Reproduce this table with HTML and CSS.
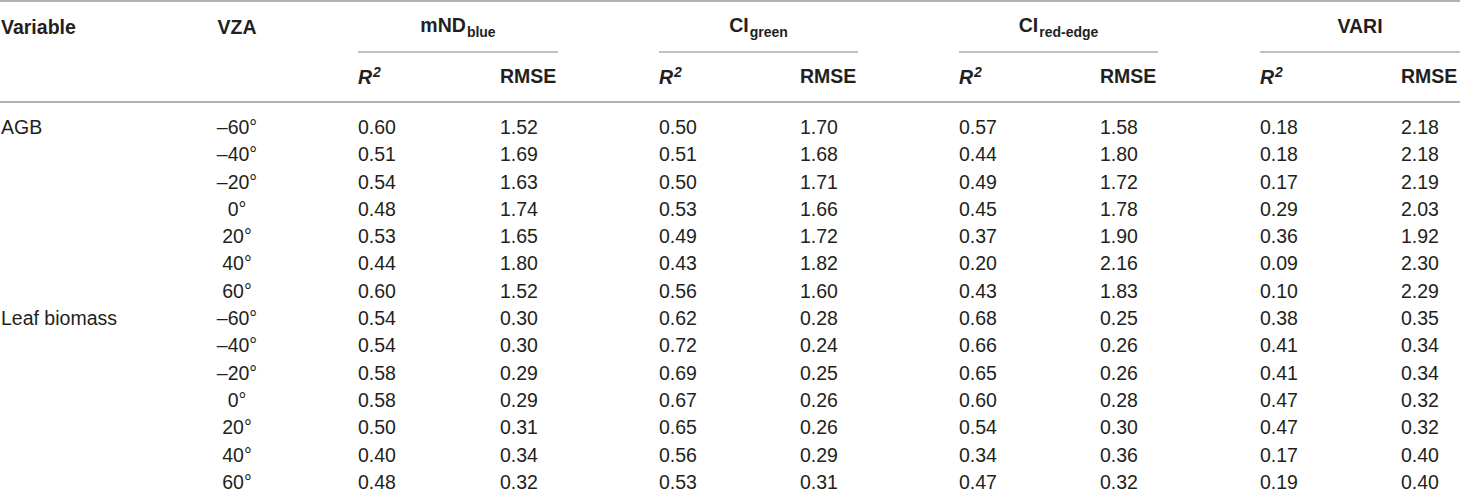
FILE: index.html
```html
<!DOCTYPE html>
<html lang="en">
<head>
<meta charset="utf-8">
<title>VZA table</title>
<link rel="stylesheet" href="styles.css">
</head>
<body>
<table class="tbl">
  <colgroup>
    <col class="c-var"><col class="c-vza"><col class="c-sp1">
    <col class="c-r2a"><col class="c-rm"><col class="c-gap">
    <col class="c-r2"><col class="c-rm"><col class="c-gap">
    <col class="c-r2"><col class="c-rm"><col class="c-gap2">
    <col class="c-r2"><col class="c-rm2">
  </colgroup>
  <thead>
    <tr class="h1">
      <th class="left">Variable</th>
      <th class="center">VZA</th>
      <th></th>
      <th colspan="2" class="grp">mND<span class="sub">blue</span></th>
      <th></th>
      <th colspan="2" class="grp">CI<span class="sub">green</span></th>
      <th></th>
      <th colspan="2" class="grp">CI<span class="sub">red-edge</span></th>
      <th></th>
      <th colspan="2" class="grp">VARI</th>
    </tr>
    <tr class="h2">
      <th></th><th></th><th></th>
      <th class="left"><i>R</i><span class="sup">2</span></th><th class="left">RMSE</th><th></th>
      <th class="left"><i>R</i><span class="sup">2</span></th><th class="left">RMSE</th><th></th>
      <th class="left"><i>R</i><span class="sup">2</span></th><th class="left">RMSE</th><th></th>
      <th class="left"><i>R</i><span class="sup">2</span></th><th class="left">RMSE</th>
    </tr>
  </thead>
  <tbody>
    <tr class="first"><td>AGB</td><td class="center">–60°</td><td></td><td>0.60</td><td>1.52</td><td></td><td>0.50</td><td>1.70</td><td></td><td>0.57</td><td>1.58</td><td></td><td>0.18</td><td>2.18</td></tr>
    <tr><td></td><td class="center">–40°</td><td></td><td>0.51</td><td>1.69</td><td></td><td>0.51</td><td>1.68</td><td></td><td>0.44</td><td>1.80</td><td></td><td>0.18</td><td>2.18</td></tr>
    <tr><td></td><td class="center">–20°</td><td></td><td>0.54</td><td>1.63</td><td></td><td>0.50</td><td>1.71</td><td></td><td>0.49</td><td>1.72</td><td></td><td>0.17</td><td>2.19</td></tr>
    <tr><td></td><td class="center">0°</td><td></td><td>0.48</td><td>1.74</td><td></td><td>0.53</td><td>1.66</td><td></td><td>0.45</td><td>1.78</td><td></td><td>0.29</td><td>2.03</td></tr>
    <tr><td></td><td class="center">20°</td><td></td><td>0.53</td><td>1.65</td><td></td><td>0.49</td><td>1.72</td><td></td><td>0.37</td><td>1.90</td><td></td><td>0.36</td><td>1.92</td></tr>
    <tr><td></td><td class="center">40°</td><td></td><td>0.44</td><td>1.80</td><td></td><td>0.43</td><td>1.82</td><td></td><td>0.20</td><td>2.16</td><td></td><td>0.09</td><td>2.30</td></tr>
    <tr><td></td><td class="center">60°</td><td></td><td>0.60</td><td>1.52</td><td></td><td>0.56</td><td>1.60</td><td></td><td>0.43</td><td>1.83</td><td></td><td>0.10</td><td>2.29</td></tr>
    <tr><td>Leaf biomass</td><td class="center">–60°</td><td></td><td>0.54</td><td>0.30</td><td></td><td>0.62</td><td>0.28</td><td></td><td>0.68</td><td>0.25</td><td></td><td>0.38</td><td>0.35</td></tr>
    <tr><td></td><td class="center">–40°</td><td></td><td>0.54</td><td>0.30</td><td></td><td>0.72</td><td>0.24</td><td></td><td>0.66</td><td>0.26</td><td></td><td>0.41</td><td>0.34</td></tr>
    <tr><td></td><td class="center">–20°</td><td></td><td>0.58</td><td>0.29</td><td></td><td>0.69</td><td>0.25</td><td></td><td>0.65</td><td>0.26</td><td></td><td>0.41</td><td>0.34</td></tr>
    <tr><td></td><td class="center">0°</td><td></td><td>0.58</td><td>0.29</td><td></td><td>0.67</td><td>0.26</td><td></td><td>0.60</td><td>0.28</td><td></td><td>0.47</td><td>0.32</td></tr>
    <tr><td></td><td class="center">20°</td><td></td><td>0.50</td><td>0.31</td><td></td><td>0.65</td><td>0.26</td><td></td><td>0.54</td><td>0.30</td><td></td><td>0.47</td><td>0.32</td></tr>
    <tr><td></td><td class="center">40°</td><td></td><td>0.40</td><td>0.34</td><td></td><td>0.56</td><td>0.29</td><td></td><td>0.34</td><td>0.36</td><td></td><td>0.17</td><td>0.40</td></tr>
    <tr><td></td><td class="center">60°</td><td></td><td>0.48</td><td>0.32</td><td></td><td>0.53</td><td>0.31</td><td></td><td>0.47</td><td>0.32</td><td></td><td>0.19</td><td>0.40</td></tr>
  </tbody>
</table>
</body>
</html>
```

FILE: styles.css
```css
html, body {
  margin: 0;
  padding: 0;
  background: #ffffff;
}

body {
  font-family: "Liberation Sans", Arial, sans-serif;
  color: #231f20;
  overflow: hidden;
}

.tbl {
  width: 1460px;
  table-layout: fixed;
  border-collapse: separate;
  border-spacing: 0;
  font-size: 19.5px;
  border-top: 2px solid #b3b3b3;
}

.c-var { width: 215px; }
.c-vza { width: 44px; }
.c-sp1 { width: 99px; }
.c-r2a { width: 142px; }
.c-r2 { width: 141px; }
.c-rm { width: 58px; }
.c-rm2 { width: 59px; }
.c-gap { width: 101px; }
.c-gap2 { width: 102px; }

th, td {
  padding: 0;
  text-align: left;
  white-space: nowrap;
  overflow: visible;
}

th {
  font-weight: bold;
}

.left { text-align: left; }
.center { text-align: center; }

td:first-child, th:first-child {
  padding-left: 1px;
}

.h1 th {
  height: 49px;
  vertical-align: middle;
}

.h1 th.grp {
  text-align: center;
  border-bottom: 2px solid #c2c2c2;
}

.h2 th {
  height: 47px;
  padding-bottom: 1px;
  vertical-align: middle;
  border-bottom: 2px solid #b3b3b3;
}

.sub {
  font-size: 14px;
  vertical-align: -5px;
  margin-left: 1px;
}

.sup {
  font-size: 14px;
  font-style: italic;
  font-weight: bold;
  vertical-align: 7px;
  margin-left: 1px;
}

.h2 i {
  font-style: italic;
  font-weight: bold;
}

td {
  line-height: 27.3px;
  height: 27.3px;
  vertical-align: middle;
}

.first td {
  padding-top: 11px;
}
```
